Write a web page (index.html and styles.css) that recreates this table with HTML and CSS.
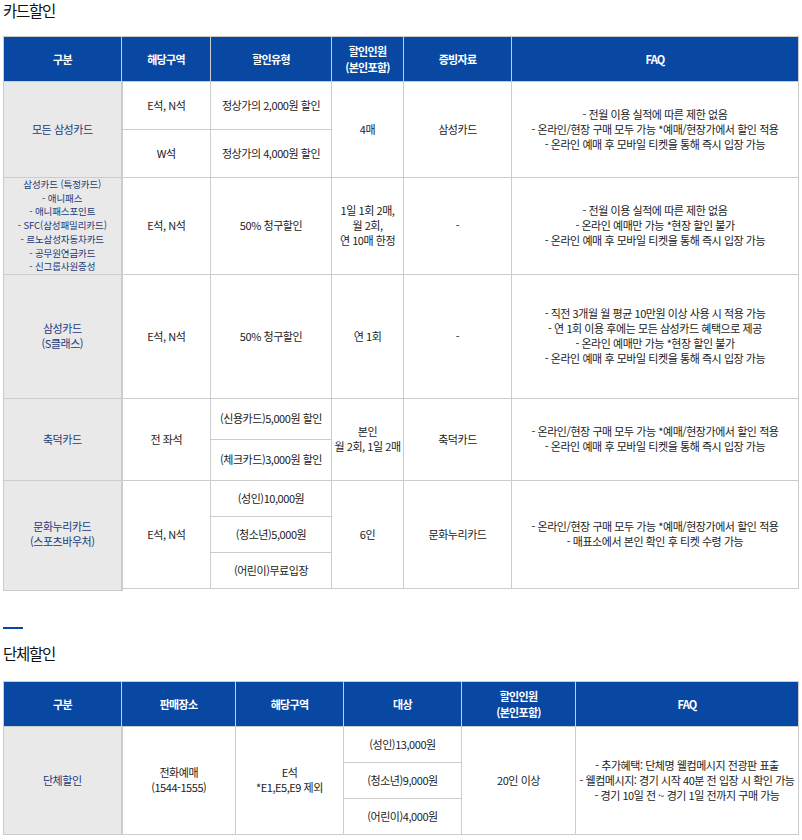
FILE: index.html
```html
<!DOCTYPE html>
<html lang="ko">
<head>
<meta charset="utf-8">
<title>할인 안내</title>
<link rel="stylesheet" href="styles.css">
</head>
<body>
<div class="page">
  <h2 class="title">카드할인</h2>
  <table class="tbl tbl-card">
    <colgroup>
      <col class="c1"><col class="c2"><col class="c3"><col class="c4"><col class="c5"><col>
    </colgroup>
    <thead>
      <tr><th>구분</th><th>해당구역</th><th>할인유형</th><th>할인인원<br>(본인포함)</th><th>증빙자료</th><th>FAQ</th></tr>
    </thead>
    <tbody>
      <tr class="r48">
        <th rowspan="2">모든 삼성카드</th>
        <td>E석, N석</td>
        <td>정상가의 2,000원 할인</td>
        <td rowspan="2">4매</td>
        <td rowspan="2">삼성카드</td>
        <td rowspan="2" class="faq">- 전월 이용 실적에 따른 제한 없음<br>- 온라인/현장 구매 모두 가능 *예매/현장가에서 할인 적용<br>- 온라인 예매 후 모바일 티켓을 통해 즉시 입장 가능</td>
      </tr>
      <tr class="r48">
        <td>W석</td>
        <td>정상가의 4,000원 할인</td>
      </tr>
      <tr class="r96">
        <th class="small">삼성카드 (특정카드)<br>- 애니패스<br>- 애니패스포인트<br>- SFC(삼성패밀리카드)<br>- 르노삼성자동차카드<br>- 공무원연금카드<br>- 신그룹사원증성</th>
        <td>E석, N석</td>
        <td>50% 청구할인</td>
        <td>1일 1회 2매,<br>월 2회,<br>연 10매 한정</td>
        <td>-</td>
        <td class="faq">- 전월 이용 실적에 따른 제한 없음<br>- 온라인 예매만 가능 *현장 할인 불가<br>- 온라인 예매 후 모바일 티켓을 통해 즉시 입장 가능</td>
      </tr>
      <tr class="r124">
        <th>삼성카드<br>(S클래스)</th>
        <td>E석, N석</td>
        <td>50% 청구할인</td>
        <td>연 1회</td>
        <td>-</td>
        <td class="faq">- 직전 3개월 월 평균 10만원 이상 사용 시 적용 가능<br>- 연 1회 이용 후에는 모든 삼성카드 혜택으로 제공<br>- 온라인 예매만 가능 *현장 할인 불가<br>- 온라인 예매 후 모바일 티켓을 통해 즉시 입장 가능</td>
      </tr>
      <tr class="r41">
        <th rowspan="2">축덕카드</th>
        <td rowspan="2">전 좌석</td>
        <td>(신용카드)5,000원 할인</td>
        <td rowspan="2" class="nowrap">본인<br>월 2회, 1일 2매</td>
        <td rowspan="2">축덕카드</td>
        <td rowspan="2" class="faq">- 온라인/현장 구매 모두 가능 *예매/현장가에서 할인 적용<br>- 온라인 예매 후 모바일 티켓을 통해 즉시 입장 가능</td>
      </tr>
      <tr class="r41">
        <td>(체크카드)3,000원 할인</td>
      </tr>
      <tr class="r36">
        <th rowspan="3" class="ext">문화누리카드<br>(스포츠바우처)</th>
        <td rowspan="3">E석, N석</td>
        <td>(성인)10,000원</td>
        <td rowspan="3">6인</td>
        <td rowspan="3">문화누리카드</td>
        <td rowspan="3" class="faq">- 온라인/현장 구매 모두 가능 *예매/현장가에서 할인 적용<br>- 매표소에서 본인 확인 후 티켓 수령 가능</td>
      </tr>
      <tr class="r36"><td>(청소년)5,000원</td></tr>
      <tr class="r36"><td>(어린이)무료입장</td></tr>
    </tbody>
  </table>

  <div class="bar"></div>
  <h2 class="title title2">단체할인</h2>
  <table class="tbl tbl-group">
    <colgroup>
      <col class="g1"><col class="g2"><col class="g3"><col class="g4"><col class="g5"><col>
    </colgroup>
    <thead>
      <tr><th>구분</th><th>판매장소</th><th>해당구역</th><th>대상</th><th>할인인원<br>(본인포함)</th><th>FAQ</th></tr>
    </thead>
    <tbody>
      <tr class="r36">
        <th rowspan="3">단체할인</th>
        <td rowspan="3">전화예매<br>(1544-1555)</td>
        <td rowspan="3">E석<br>*E1,E5,E9 제외</td>
        <td>(성인)13,000원</td>
        <td rowspan="3">20인 이상</td>
        <td rowspan="3" class="faq">- 추가혜택: 단체명 웰컴메시지 전광판 표출<br>- 웰컴메시지: 경기 시작 40분 전 입장 시 확인 가능<br>- 경기 10일 전 ~ 경기 1일 전까지 구매 가능</td>
      </tr>
      <tr class="r36"><td>(청소년)9,000원</td></tr>
      <tr class="r36"><td>(어린이)4,000원</td></tr>
    </tbody>
  </table>
</div>
</body>
</html>
```

FILE: styles.css
```css
html, body {
  margin: 0;
  padding: 0;
  background: #fff;
}
body {
  font-family: "Noto Sans CJK KR", "Noto Sans", sans-serif;
  color: #222;
}
.page {
  padding: 0 3px;
}
.title {
  margin: 0;
  font-size: 15.5px;
  line-height: 21px;
  font-weight: 400;
  color: #111;
  letter-spacing: -1.3px;
}
.tbl {
  width: 796px;
  border-collapse: collapse;
  table-layout: fixed;
  margin-top: 15px;
  font-size: 11px;
  line-height: 15px;
  letter-spacing: -0.45px;
}
.tbl th,
.tbl td {
  border: 1px solid #ccc;
  padding: 0 2px;
  text-align: center;
  vertical-align: middle;
}
.tbl thead th {
  background: #0847a2;
  color: #fff;
  font-weight: 700;
  line-height: 16px;
  height: 44px;
  letter-spacing: -0.7px;
}
.tbl tbody th {
  background: #e9e9e9;
  color: #1b3a78;
  font-weight: 400;
  border-right: 2px solid #ccc;
}
.tbl tbody th.small {
  font-size: 9.5px;
  line-height: 13.7px;
  letter-spacing: -0.1px;
}
.faq,
.nowrap {
  white-space: nowrap;
}
.c1 { width: 118px; }
.c2 { width: 89px; }
.c3 { width: 121px; }
.c4 { width: 72px; }
.c5 { width: 108px; }
.g1 { width: 118px; }
.g2 { width: 114px; }
.g3 { width: 108px; }
.g4 { width: 118px; }
.g5 { width: 114px; }
.r48 { height: 48px; }
.r96 { height: 96px; }
.r124 { height: 124px; }
.r41 { height: 41px; }
.r36 { height: 36px; }
.ext {
  position: relative;
}
.ext::after {
  content: "";
  position: absolute;
  left: -1px;
  right: -2px;
  top: 100%;
  height: 2px;
  background: #e9e9e9;
  border-left: 1px solid #ccc;
  border-right: 2px solid #ccc;
  border-bottom: 1px solid #ccc;
}
.bar {
  width: 20px;
  height: 2px;
  background: #0847a2;
  margin-top: 38px;
}
.title2 {
  margin-top: 14px;
}
.tbl-group {
  margin-top: 17px;
}
```
